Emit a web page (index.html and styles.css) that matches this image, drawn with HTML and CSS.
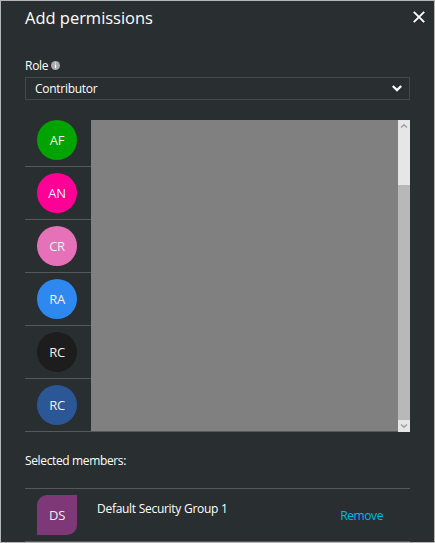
FILE: index.html
```html
<!DOCTYPE html>
<html lang="en">
<head>
<meta charset="utf-8">
<title>Add permissions</title>
<link rel="stylesheet" href="styles.css">
</head>
<body>
<main class="panel">
  <header class="header">
    <h1 class="title"><span>Add permissions</span></h1>
    <svg class="close" width="12" height="12" viewBox="0 0 12 12"><path d="M.8.8l10.4 10.4M11.2.8L.8 11.2" fill="none" stroke="#fff" stroke-width="1.9"/></svg>
  </header>
  <div class="label"><span class="role">Role</span>
    <svg class="info" width="9" height="9" viewBox="0 0 9 9"><circle cx="4.5" cy="4.5" r="4.5" fill="#a9abac"/><path d="M4.5 1.4v1.2M4.5 3.5v3.8" stroke="#fff" stroke-width="1.2"/></svg>
  </div>
  <div class="select"><span class="value">Contributor</span>
    <svg width="10" height="7" viewBox="0 0 10 7"><path d="M.8 1L5 5.1 9.2 1" fill="none" stroke="#fff" stroke-width="2.2"/></svg>
  </div>
  <section class="list">
    <div class="people">
      <div class="person"><span class="avatar green">AF</span></div>
      <div class="person"><span class="avatar magenta">AN</span></div>
      <div class="person"><span class="avatar pink">CR</span></div>
      <div class="person"><span class="avatar blue">RA</span></div>
      <div class="person"><span class="avatar black">RC</span></div>
      <div class="person"><span class="avatar navy">RC</span></div>
    </div>
    <div class="cover"></div>
    <div class="scrollbar">
      <svg class="up" width="12" height="12" viewBox="0 0 12 12"><path d="M3 7.5l3-2.7 3 2.7" fill="none" stroke="#a3a3a3" stroke-width="1.6"/></svg>
      <div class="thumb"></div>
      <svg width="12" height="12" viewBox="0 0 12 12"><path d="M3 4.5l3 2.7 3-2.7" fill="none" stroke="#a3a3a3" stroke-width="1.6"/></svg>
    </div>
  </section>
  <h2 class="subtitle"><span>Selected members:</span></h2>
  <div class="member">
    <span class="avatar group">DS</span>
    <span class="name">Default Security Group 1</span>
    <a class="remove">Remove</a>
  </div>
</main>
</body>
</html>
```
FILE: styles.css
```css
* { box-sizing: border-box; }
body { margin: 0; background: #292e31; }
.panel {
  width: 435px;
  height: 543px;
  padding: 0 24px;
  border: 1px solid #b4b6b6;
  background: #292e31;
  color: #fff;
  font: 12px/16px "Open Sans", "Noto Sans", sans-serif;
  letter-spacing: -0.28px;
  overflow: hidden;
}
svg { display: block; flex: none; }
.header { display: flex; justify-content: space-between; height: 57px; margin-right: -15px; padding-top: 5px; }
.title { margin: 0; font-size: 16.5px; line-height: 24px; font-weight: 400; letter-spacing: -0.02px; }
.close { margin-top: 5px; }
.label { display: flex; align-items: center; gap: 3px; height: 16px; }
.info { margin-bottom: 1px; }
.select {
  display: flex;
  align-items: center;
  justify-content: space-between;
  height: 23px;
  margin-top: 3px;
  padding: 0 7px 0 9px;
  border: 1px solid #44494c;
}
.list { display: flex; height: 312px; margin-top: 20px; border-bottom: 1px solid #55595c; }
.people { width: 66px; }
.person { height: 53px; padding: 6px 12px 0; border-bottom: 1px solid #55595c; }
.person:first-child { height: 47px; padding-top: 0; }
.person:last-child { border: 0; }
.avatar {
  display: block;
  flex: none;
  width: 40px;
  height: 40px;
  border-radius: 50%;
  color: #f0f0f0;
  font-size: 13px;
  line-height: 40px;
  text-align: center;
}
.green { background: #00a300; }
.magenta { background: #ff0097; }
.pink { background: #e671b8; }
.blue { background: #2d89ef; }
.black { background: #1d1d1d; }
.navy { background: #2b5797; }
.cover { flex: 1; background: #808080; }
.scrollbar { display: flex; flex-direction: column; width: 12px; height: 312px; background: #e6e6e6; }
.up { margin-bottom: 53px; }
.thumb { flex: 1; background: #b8b8b8; }
.subtitle { margin: 21px 0 19px; font-size: 12px; line-height: 16px; font-weight: 400; letter-spacing: -0.36px; }
.member { display: flex; height: 54px; padding: 6px 27px 0 12px; border: solid #55595c; border-width: 1px 0; }
.group { border-radius: 10px 0; background: #7e3878; }
.name { margin: 6px auto 0 20px; }
.remove { margin-top: 13px; color: #00b7f5; letter-spacing: -0.4px; }
```
